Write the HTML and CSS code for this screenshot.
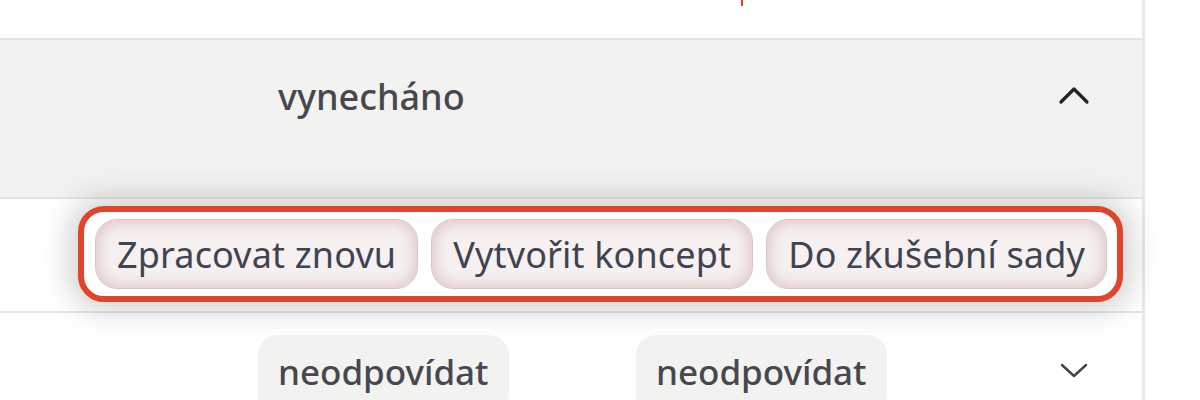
FILE: index.html
```html
<!DOCTYPE html>
<html lang="cs">
<head>
<meta charset="utf-8">
<title>Řádky</title>
<link rel="stylesheet" href="styles.css">
</head>
<body>
<div class="page">
  <div class="panel">
    <div class="row row-top"><span class="red-mark"></span></div>
    <div class="row row-skip">
      <span class="status">vynecháno</span>
      <svg class="chevron chevron-up" width="32" height="20" viewBox="0 0 32 20"><polyline points="3,17 16,4 29,17" fill="none" stroke="#222" stroke-width="3.2" stroke-linecap="round" stroke-linejoin="round"/></svg>
    </div>
    <div class="row row-actions">
      <div class="action-group">
        <button class="action">Zpracovat znovu</button>
        <button class="action">Vytvořit koncept</button>
        <button class="action">Do zkušební sady</button>
      </div>
    </div>
    <div class="row row-next">
      <div class="cell cell-first"><span class="pill">neodpovídat</span></div>
      <div class="cell"><span class="pill">neodpovídat</span></div>
      <svg class="chevron chevron-down" width="32" height="20" viewBox="0 0 32 20"><polyline points="4,5 16,16 28,5" fill="none" stroke="#444" stroke-width="2.4" stroke-linecap="round" stroke-linejoin="round"/></svg>
    </div>
  </div>
</div>
</body>
</html>
```

FILE: styles.css
```css
html, body {
  margin: 0;
  padding: 0;
  background: #ffffff;
  height: 400px;
  overflow: hidden;
}

.page {
  display: flex;
  font-family: "Noto Sans", "Open Sans", sans-serif;
  color: #46484e;
}

.panel {
  width: 1142px;
  border-right: 3px solid #e9e8e6;
  display: flex;
  flex-direction: column;
}

.row {
  display: flex;
  box-sizing: border-box;
  border-bottom: 2px solid #e6e5e2;
}

.row-top {
  height: 40px;
  background: #ffffff;
  padding-left: 741px;
}

.red-mark {
  width: 2px;
  height: 6px;
  background: #d8412a;
}

.row-skip {
  height: 159px;
  background: #f2f2f0;
  padding: 33px 52px 0 278px;
  align-items: flex-start;
}

.status {
  font-size: 36px;
  font-weight: 500;
  line-height: 48px;
  color: #46484e;
}

.chevron {
  margin-left: auto;
}

.chevron-up {
  margin-top: 12px;
}

.row-actions {
  height: 114px;
  padding: 7px 0 0 78px;
  align-items: flex-start;
  background: #ffffff;
}

.action-group {
  display: flex;
  gap: 13px;
  padding: 7px 10px 7px 11px;
  border: 6px solid #e0442b;
  border-radius: 26px;
  background: #ffffff;
  box-shadow: 0 0 30px 8px rgba(0, 0, 0, 0.19);
}

.action {
  height: 70px;
  padding: 0 21px;
  font-family: "Noto Sans", "Open Sans", sans-serif;
  font-size: 36px;
  font-weight: 400;
  letter-spacing: 0.15px;
  color: #3e4451;
  border: 1px solid #d6c8c8;
  border-radius: 22px;
  background: #f6f0f0;
  box-shadow: inset 0 0 14px 3px rgba(190, 140, 140, 0.42);
  white-space: nowrap;
}

.row-next {
  flex: 1;
  border-bottom: none;
  padding: 22px 52px 0 258px;
  align-items: flex-start;
}

.cell-first {
  width: 378px;
}

.pill {
  display: inline-block;
  height: 80px;
  padding: 13px 20px 0;
  box-sizing: border-box;
  line-height: 48px;
  border-radius: 20px;
  background: #f2f2f0;
  font-size: 35px;
  font-weight: 500;
  color: #46484e;
}

.chevron-down {
  margin-top: 25px;
}
```
